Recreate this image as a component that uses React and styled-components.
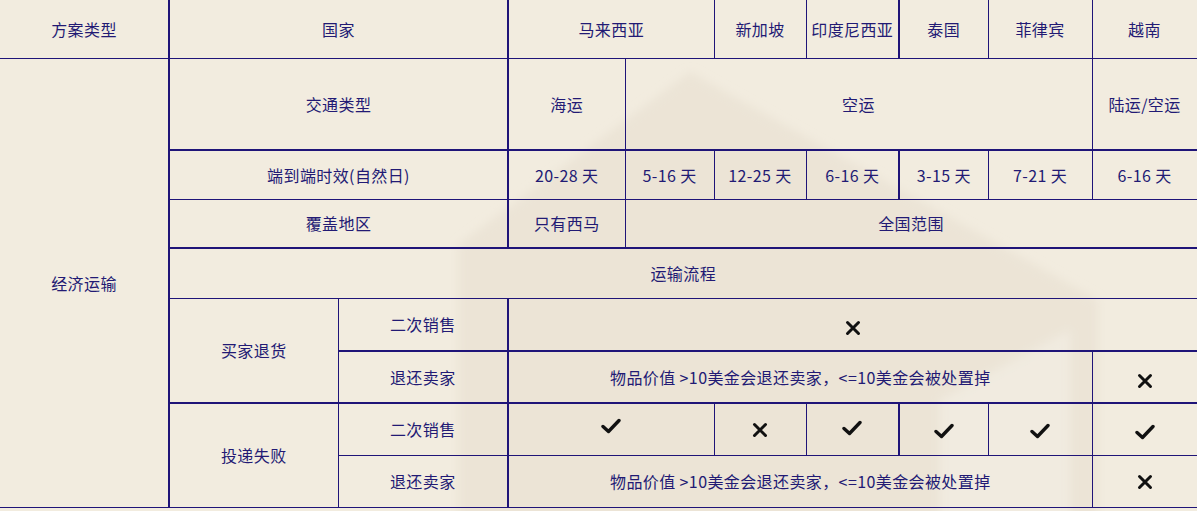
import React from 'react';
import styled, { createGlobalStyle } from 'styled-components';

const GlobalStyle = createGlobalStyle`
  html, body {
    margin: 0;
    padding: 0;
    background: #f2ecdf;
  }
  body {
    font-family: "Microsoft YaHei", "Noto Sans CJK SC", "Noto Sans", sans-serif;
  }
`;

const LINE = '#1f1478';

const Page = styled.div`
  position: relative;
  width: 1197px;
  height: 511px;
  overflow: hidden;
  background: #f2ecdf;
`;

// faint logo watermark that sits behind the table
const Watermark = styled.svg`
  position: absolute;
  left: 0;
  top: 0;
  pointer-events: none;
`;

const Table = styled.table`
  position: relative;
  width: 1197px;
  border-collapse: collapse;
  table-layout: fixed;
  color: #221a74;
  font-size: 16px;
  letter-spacing: 0.4px;
`;

const Row = styled.tr`
  height: ${(p) => p.$h}px;
`;

const Cell = styled.td`
  padding: 0;
  text-align: center;
  vertical-align: middle;
  border: 1px solid ${LINE};
  border-left-width: ${(p) => (p.$tl ? 2 : 1)}px;
  border-top-width: ${(p) => (p.$tt ? 2 : 1)}px;
  white-space: nowrap;
  line-height: 20px;
`;

const FirstCell = styled(Cell)`
  border-left: none;
`;

const TopCell = styled(Cell)`
  border-top: none;
`;

const CornerCell = styled(TopCell)`
  border-left: none;
`;

const Mark = styled.svg`
  display: inline-block;
  vertical-align: middle;
  position: relative;
  top: ${(p) => p.$dy || 0}px;
`;

const Check = ({ dy }) => (
  <Mark width="20" height="16" viewBox="0 0 20 16" $dy={dy}>
    <path d="M2 8.5 L7.5 13.5 L18 2.5" fill="none" stroke="#111" strokeWidth="3.4" strokeLinecap="round" strokeLinejoin="round" />
  </Mark>
);

const Cross = ({ dy }) => (
  <Mark width="16" height="16" viewBox="0 0 16 16" $dy={dy}>
    <path d="M2.5 2.5 L13.5 13.5 M13.5 2.5 L2.5 13.5" fill="none" stroke="#111" strokeWidth="3" strokeLinecap="round" />
  </Mark>
);

const widths = [169, 169, 170, 117, 89, 92, 93, 89, 104, 105];

const RETURN_TEXT = '物品价值 >10美金会退还卖家，<=10美金会被处置掉';

const App = () => (
  <Page>
    <GlobalStyle />
    <Watermark width="1197" height="511" viewBox="0 0 1197 511">
      <defs>
        <filter id="soft" x="-10%" y="-10%" width="120%" height="120%">
          <feGaussianBlur stdDeviation="5" />
        </filter>
      </defs>
      <g filter="url(#soft)">
        <path d="M458 245 L690 72 L1098 300 L1098 530 L458 530 Z" fill="#e7e0d1" opacity="0.6" />
        <path d="M940 400 L1070 330 L1070 530 L940 530 Z" fill="#f6f2ea" opacity="0.5" />
      </g>
    </Watermark>
    <Table>
      <colgroup>
        {widths.map((w, i) => (
          <col key={i} style={{ width: w }} />
        ))}
      </colgroup>
      <tbody>
        <Row $h={58}>
          <CornerCell>方案类型</CornerCell>
          <TopCell colSpan={2} $tl>国家</TopCell>
          <TopCell colSpan={2} $tl>马来西亚</TopCell>
          <TopCell>新加坡</TopCell>
          <TopCell>印度尼西亚</TopCell>
          <TopCell $tl>泰国</TopCell>
          <TopCell>菲律宾</TopCell>
          <TopCell>越南</TopCell>
        </Row>
        <Row $h={92}>
          <FirstCell rowSpan={8}>经济运输</FirstCell>
          <Cell colSpan={2} $tl>交通类型</Cell>
          <Cell $tl>海运</Cell>
          <Cell colSpan={5}>空运</Cell>
          <Cell>陆运/空运</Cell>
        </Row>
        <Row $h={49}>
          <Cell colSpan={2} $tl $tt>端到端时效(自然日)</Cell>
          <Cell $tl $tt>20-28 天</Cell>
          <Cell $tt>5-16 天</Cell>
          <Cell $tt>12-25 天</Cell>
          <Cell $tt>6-16 天</Cell>
          <Cell $tt $tl>3-15 天</Cell>
          <Cell $tt>7-21 天</Cell>
          <Cell $tt>6-16 天</Cell>
        </Row>
        <Row $h={49}>
          <Cell colSpan={2} $tl>覆盖地区</Cell>
          <Cell $tl>只有西马</Cell>
          <Cell colSpan={6}>全国范围</Cell>
        </Row>
        <Row $h={50}>
          <Cell colSpan={9} $tl $tt>运输流程</Cell>
        </Row>
        <Row $h={53}>
          <Cell rowSpan={2} $tl>买家退货</Cell>
          <Cell>二次销售</Cell>
          <Cell colSpan={7} $tl><Cross dy={1} /></Cell>
        </Row>
        <Row $h={52}>
          <Cell $tt>退还卖家</Cell>
          <Cell colSpan={6} $tl $tt>{RETURN_TEXT}</Cell>
          <Cell $tt><Cross dy={2} /></Cell>
        </Row>
        <Row $h={52}>
          <Cell rowSpan={2} $tl $tt>投递失败</Cell>
          <Cell $tt>二次销售</Cell>
          <Cell colSpan={2} $tl $tt><Check dy={-6} /></Cell>
          <Cell $tt><Cross dy={-2} /></Cell>
          <Cell $tt><Check dy={-4} /></Cell>
          <Cell $tt $tl><Check dy={-1} /></Cell>
          <Cell $tt><Check dy={-1} /></Cell>
          <Cell $tt><Check dy={0} /></Cell>
        </Row>
        <Row $h={52}>
          <Cell>退还卖家</Cell>
          <Cell colSpan={6} $tl>{RETURN_TEXT}</Cell>
          <Cell><Cross dy={-1} /></Cell>
        </Row>
      </tbody>
    </Table>
  </Page>
);

export default App;
